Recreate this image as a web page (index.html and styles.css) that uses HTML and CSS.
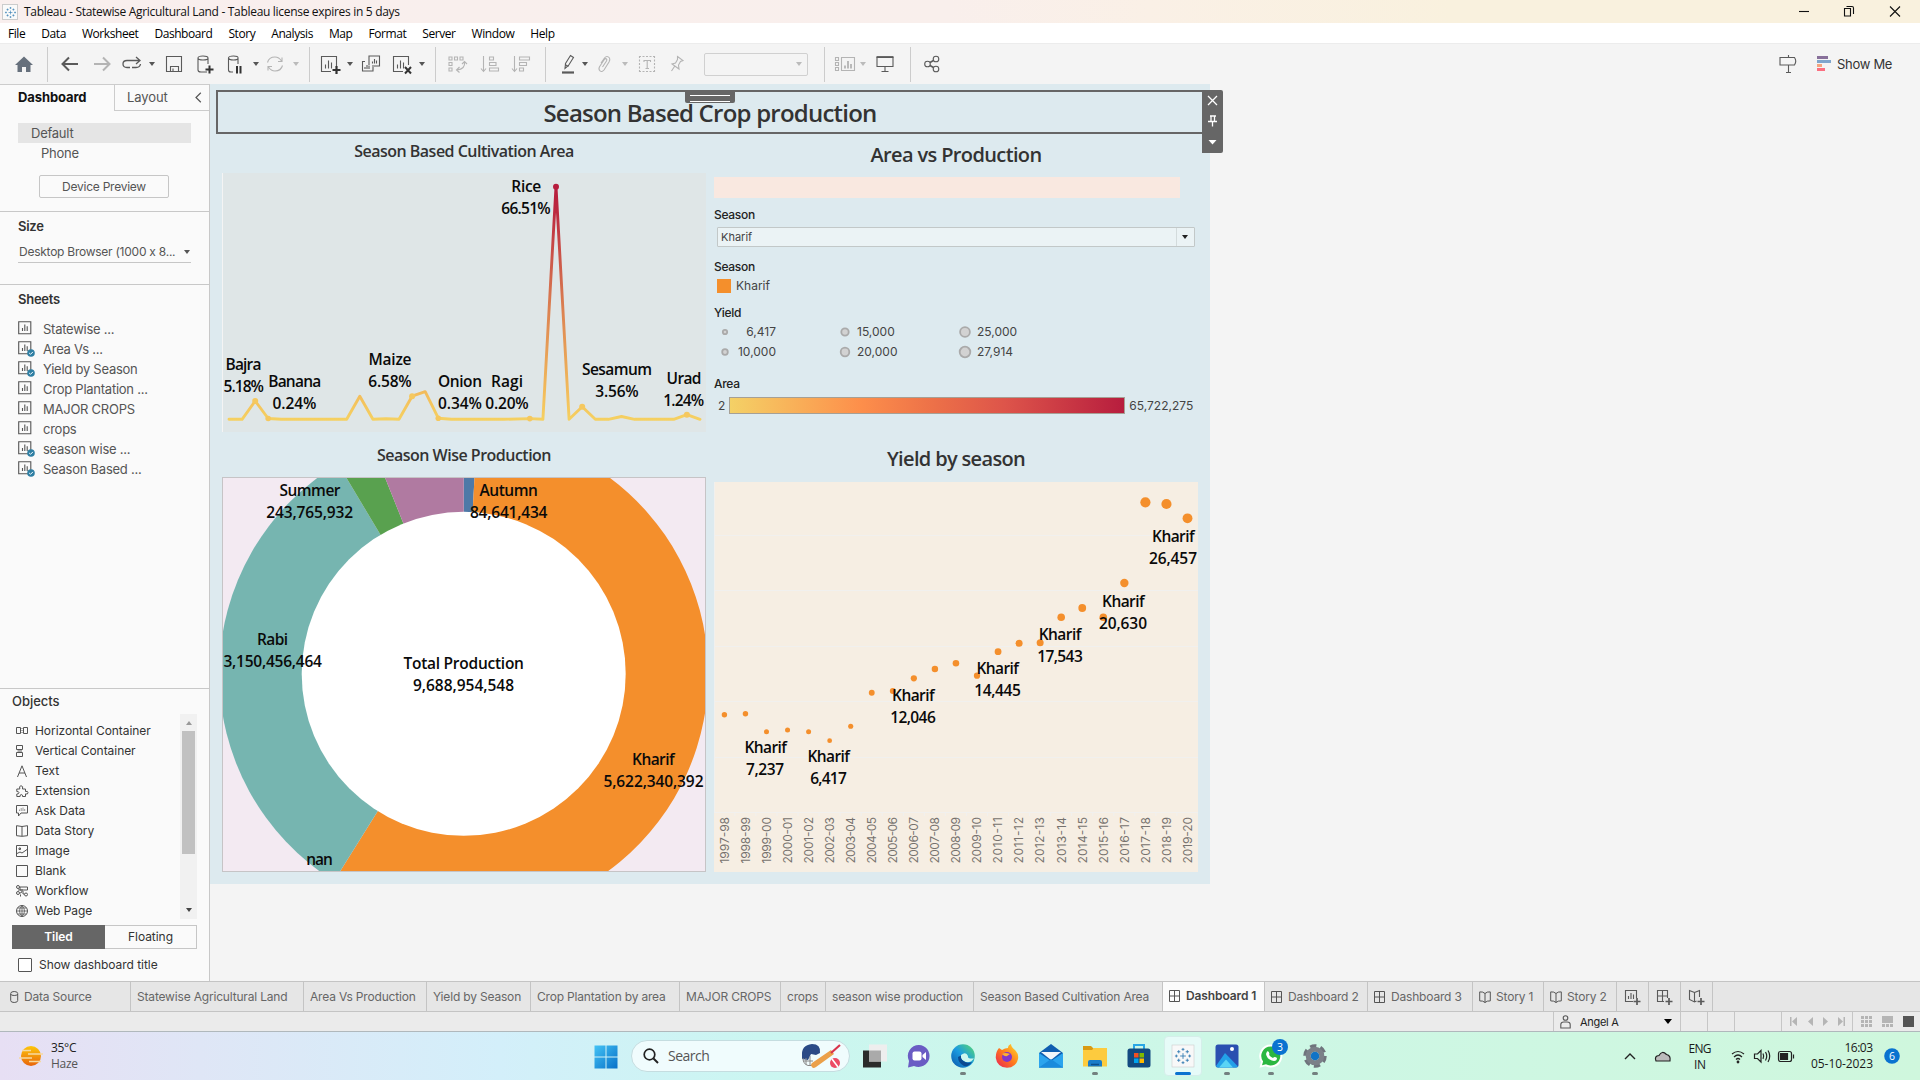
FILE: index.html
```html
<!DOCTYPE html>
<html lang="en">
<head>
<meta charset="utf-8">
<title>Tableau - Statewise Agricultural Land</title>
<link rel="stylesheet" href="styles.css">
</head>
<body>
<svg class="defs" width="0" height="0">
  <symbol id="i-sheet" viewBox="0 0 14 14"><path d="M.7.7h12.1v12.1H.7zM4.5 10V7M6.8 10V3.5M9.2 10V5.2" fill="none" stroke="#555" stroke-width="1.1"/></symbol>
  <symbol id="i-check" viewBox="0 0 8 8"><circle cx="4" cy="4" r="3.8" fill="#2f7fa3"/><path d="M2.2 4l1.3 1.3L5.9 2.9" fill="none" stroke="#fff"/></symbol>
  <symbol id="i-dash" viewBox="0 0 12 12"><path d="M.5.5h10v11H.5zM5.500.5v11M.5 6h10" fill="none" stroke="#555"/></symbol>
  <symbol id="i-story" viewBox="0 0 12 12"><path d="M6 2.500v9M6 2.500Q4 .5 .7.9v9Q4 9.600 6 11.500Q8 9.600 11.300 9.900V.9Q8 .5 6 2.500" fill="none" stroke="#555"/></symbol>
  <symbol id="i-tableau" viewBox="0 0 20 20"><path d="M10 7v6M7 10h6M10 1.500v3M8.500 3h3M10 15.500v3M8.500 17h3M3 8.500v3M1.500 10h3M17 8.500v3M15.500 10h3M5.500 3.800v3.400M3.800 5.500h3.400M14.500 3.800v3.400M12.800 5.500h3.400M5.500 12.800v3.400M3.800 14.500h3.400M14.500 12.800v3.400M12.800 14.500h3.400" fill="none" stroke="#2d78b0" stroke-width=".9"/></symbol>
</svg>

<header class="titlebar">
  <span class="appicon"><svg width="13" height="13"><use href="#i-tableau"/></svg></span>
  <span class="apptitle">Tableau - Statewise Agricultural Land - Tableau license expires in 5 days</span>
  <svg class="winbtns" width="110" height="22" viewBox="1795 0 110 22" fill="none" stroke="#111" stroke-width="1.1"><path d="M1799 10.500h10"/><path d="M1844.500 7.500h6v7.500h-6zM1846.500 5.500h5.500q1.500 0 1.500 1.500v6"/><path d="M1890 5.500l10 10M1900 5.500l-10 10"/></svg>
</header>

<nav class="menubar"><span>File</span><span>Data</span><span>Worksheet</span><span>Dashboard</span><span>Story</span><span>Analysis</span><span>Map</span><span>Format</span><span>Server</span><span>Window</span><span>Help</span></nav>

<div class="toolbar">
  <svg viewBox="0 0 24 24"><path d="M12 4.500l9 8.500h-2.500v7h-4.500v-5h-4v5H5.500v-7H3z" fill="#66707c"/></svg>
  <i class="sep left"></i>
  <svg viewBox="0 0 24 24" class="k2"><path d="M20 12H5M11 5.500L4.500 12l6.500 6.500"/></svg>
  <svg viewBox="0 0 24 24" class="g2"><path d="M4 12h15M13 5.500l6.500 6.500-6.500 6.500"/></svg>
  <svg viewBox="0 0 24 24" class="k"><path d="M10 15.500H7q-4 0-4-3.500t4-3.500h12M16 5l4 3.500-4 3.500M12 15.500h4q4 0 4.500-3.500" stroke-width="1.300"/></svg>
  <i class="caret"></i>
  <svg viewBox="0 0 24 24" class="k"><path d="M4.500 4.500h15v15h-15zM8.500 19.500v-5h8v5M11 19.500v-3"/></svg>
  <svg viewBox="0 0 24 24" class="k"><path d="M14 20H8q-3 0-3-2V6M15 6v6M5 6q0-2 5-2t5 2q0 2-5 2t-5-2"/><path d="M12.500 17.500h8M16.500 13.500v8" stroke="#333" stroke-width="2"/></svg>
  <svg viewBox="0 0 24 24" class="k"><path d="M10 20H8q-2.500 0-2.500-2V6M15 6v6M5.500 6q0-2 5-2t4.500 2q0 2-4.500 2t-5-2"/><path d="M14 14v7.500M17.500 14v7.500" stroke="#333" stroke-width="2"/></svg>
  <i class="caret"></i>
  <svg viewBox="0 0 24 24" class="g"><path d="M4.500 10.500Q6 5 12 5q4 0 6.500 4M19 5.500V9.500h-4M19.500 13.500Q18 19 12 19q-4 0-6.500-4M5 18.500V14.500h4"/></svg>
  <i class="caret pale"></i>
  <i class="sep"></i>
  <svg viewBox="0 0 24 24" class="k"><path d="M13 19.500H3.500v-15h15V14M7.500 16.500v-4M10.500 16.500v-8M13.500 16.500v-6"/><path d="M14.500 18h8M18.500 14v8" stroke="#333" stroke-width="2.200"/></svg>
  <i class="caret"></i>
  <svg viewBox="0 0 24 24" class="k"><path d="M10 13.500V4h10.500v10H13M6 9.500H3.500v9.500H14v-4M13.500 11.500v-2M15.500 11.500V7M17.500 11.500v-3M6 17v-2M8 17v-4M10 17v-3"/></svg>
  <svg viewBox="0 0 24 24" class="k"><path d="M13 19.500H3.500v-15h15V13M7.500 16.500v-4M10.500 16.500v-8M13.500 16.500v-6"/><path d="M15 15l6 6.500M21 15l-6 6.500" stroke="#333" stroke-width="2"/></svg>
  <i class="caret"></i>
  <i class="sep"></i>
  <svg viewBox="0 0 24 24" class="g"><path d="M4 5h3v3H4zM9.500 5h3v3h-3zM15 5h3v3h-3zM4 10.500h3v3H4zM4 16h3v3H4zM19.500 10q1 7-7.500 8M17 12l2.500-2.500L22 12M14.500 15L11.500 18l3 2.500"/></svg>
  <svg viewBox="0 0 24 24" class="g"><path d="M5.500 4v15M3 16.500L5.500 19.500 8 16.500M11.500 5h4v3h-4zM11.500 10.500h6.500v3h-6.500zM11.500 16h9v3h-9z"/></svg>
  <svg viewBox="0 0 24 24" class="g"><path d="M5.500 4v15M3 16.500L5.500 19.500 8 16.500M10.500 5h10v3h-10zM10.500 10.500h7v3h-7zM10.500 16h4v3h-4z"/></svg>
  <i class="sep"></i>
  <svg viewBox="0 0 24 24" class="k"><path d="M8.500 11.500L13.500 3.500l3 2-5 8-3.500 3zM8 12.500l3.500 2"/><path d="M5 20.500h12" stroke-width="2.200"/></svg>
  <i class="caret"></i>
  <svg viewBox="0 0 24 24" class="g"><path d="M8 11l3.500-5q2.500-3 5 0 .8 1.500-.5 4l-5 8q-2 2.500-4 .8-1.800-1.500-.5-4l5-7.500q1-1.200 2-.3.800.8 0 2l-4 6"/></svg>
  <i class="caret pale"></i>
  <svg viewBox="0 0 24 24" class="g"><path d="M4 4.500h16M4 19.500h16M4.500 4v16M19.500 4v16" stroke-dasharray="2 1.500"/><path d="M9 10V8.500h6.500V10M12.200 8.500v8M10.500 16.500h3.500"/></svg>
  <svg viewBox="0 0 24 24" class="g"><path d="M12.500 4.500l5.500 4-2.500 1-2 3.500.5 4-7-5 3.500-1 2-3.500zM9.500 14.500L6.500 19"/></svg>
  <span class="combo"><i class="caret pale"></i></span>
  <i class="sep"></i>
  <svg viewBox="0 0 24 24" class="g"><path d="M8.500 5.500h13v13h-13zM2.500 5.500h3v3h-3zM2.500 10.500h3v3h-3zM2.500 15.500h3v3h-3z"/><path d="M12 16.500v-3M15 16.500V9M18 16.500V12" stroke-width="1.800"/></svg>
  <i class="caret pale"></i>
  <svg viewBox="0 0 24 24" class="k"><path d="M4 5.500h16v9H4zM12 14.500v5M8.500 19.500h7"/><path d="M3.500 5h17" stroke-width="1.800"/></svg>
  <i class="sep"></i>
  <svg viewBox="0 0 24 24" class="k"><circle cx="7.500" cy="12" r="2.800"/><circle cx="16" cy="7" r="2.800"/><circle cx="16" cy="17" r="2.800"/><path d="M10 10.500l3.500-2M10 13.500l3.500 2" stroke-width="1.500"/></svg>
  <b></b>
  <svg viewBox="0 0 24 24" class="k"><path d="M12.500 3v2.500M12.500 13v8M10 20.500h5M4 5.500h14.500q2.500 3.500 0 7.500H4z"/></svg>
  <div class="showme"><svg width="15" height="16" viewBox="0 0 15 16"><path fill="#88709a" d="M0 0h11v3H0z"/><path fill="#7fa5cc" d="M0 4h14v3H0z"/><path fill="#f4a57f" d="M0 8h5v3H0z"/><path fill="#fb6f80" d="M0 12h8v3H0z"/></svg><span>Show Me</span></div>
</div>

<main class="work">
  <aside class="side">
    <div class="sidetabs"><b>Dashboard</b><div><span>Layout</span><svg width="7" height="11" viewBox="0 0 7 11"><path d="M5.800.8L1 5.500l4.800 4.700" fill="none" stroke="#555" stroke-width="1.200"/></svg></div></div>
    <section class="devices">
      <div class="dev on">Default</div>
      <div class="dev phone">Phone</div>
      <div class="preview"><span>Device Preview</span></div>
    </section>
    <section class="size"><h3>Size</h3><div class="sizepick"><span>Desktop Browser (1000 x 8...</span><i class="caret"></i></div></section>
    <section class="sheets"><h3>Sheets</h3>
      <ul>
        <li><em><svg class="sh"><use href="#i-sheet"/></svg></em><span>Statewise ...</span></li>
        <li><em><svg class="sh"><use href="#i-sheet"/></svg><svg class="ck"><use href="#i-check"/></svg></em><span>Area Vs ...</span></li>
        <li><em><svg class="sh"><use href="#i-sheet"/></svg><svg class="ck"><use href="#i-check"/></svg></em><span>Yield by Season</span></li>
        <li><em><svg class="sh"><use href="#i-sheet"/></svg></em><span>Crop Plantation ...</span></li>
        <li><em><svg class="sh"><use href="#i-sheet"/></svg></em><span>MAJOR CROPS</span></li>
        <li><em><svg class="sh"><use href="#i-sheet"/></svg></em><span>crops</span></li>
        <li><em><svg class="sh"><use href="#i-sheet"/></svg><svg class="ck"><use href="#i-check"/></svg></em><span>season wise ...</span></li>
        <li><em><svg class="sh"><use href="#i-sheet"/></svg><svg class="ck"><use href="#i-check"/></svg></em><span>Season Based ...</span></li>
      </ul>
    </section>
    <section class="objects"><h3>Objects</h3>
      <div class="objbox">
        <ul>
          <li><svg viewBox="0 0 12 12"><path d="M.5 2.500h4v6h-4zM7.500 2.500h4v6h-4z"/><path d="M5 3.500h2M5 5.500h2M5 7.500h2" stroke="#aaa"/></svg><span>Horizontal Container</span></li>
          <li><svg viewBox="0 0 12 12"><path d="M.5.5h6v4h-6zM.5 7.500h6v4h-6z"/><path d="M1.500 6h4.500" stroke="#aaa" stroke-width="2"/></svg><span>Vertical Container</span></li>
          <li><svg viewBox="0 0 12 12"><path d="M1.500 12L6 .8 10.500 12M3 8h6"/></svg><span>Text</span></li>
          <li><svg viewBox="0 0 12 12"><path d="M.8 4h3q-1-3 1.200-3.300Q7.500 1 6.500 4h3v2.500q2.500-.8 2.500 1.200t-2.500 1.200V11.500h-3q.3-2-1.200-2t-1.200 2H.8V9q2.200 0 2.200-1.300T.8 6.500z"/></svg><span>Extension</span></li>
          <li><svg viewBox="0 0 12 12"><path d="M.5.5h11v7.500H5l-2.500 3V8h-2z"/><path d="M3.500 6V4.500M5.200 6V3M7 6V2.500M8.700 6V4" stroke="#999"/></svg><span>Ask Data</span></li>
          <li><svg viewBox="0 0 12 12"><path d="M6 1.500v9.500M6 1.500L.5.7v10l5.500.6 5.500-.6v-10z"/></svg><span>Data Story</span></li>
          <li><svg viewBox="0 0 12 12"><path d="M.5.5h11v11H.5zM1 8.500l3-1.500 2 1 5-3.500M3 3h1.500v1.500H3z"/></svg><span>Image</span></li>
          <li><svg viewBox="0 0 12 12"><path d="M.5.5h11v11H.5z"/></svg><span>Blank</span></li>
          <li><svg viewBox="0 0 12 12"><circle cx="2" cy="2" r="1.500"/><circle cx="2" cy="8" r="1.500"/><circle cx="10" cy="9.500" r="1.500"/><path d="M4 2h7.500v3H4zM4 8q2 0 2-2M7 6v3h1.500M4.500 9.500v2M2 5h5"/></svg><span>Workflow</span></li>
          <li><svg viewBox="0 0 12 12"><circle cx="6" cy="6" r="5.500"/><path d="M.5 6h11M6 .5v11M6 .5q-5 5.500 0 11M6 .5q5 5.500 0 11M1.500 3h9M1.500 9h9" stroke-width=".8"/></svg><span>Web Page</span></li>
        </ul>
        <div class="scroll"><i class="up"></i><i class="thumb"></i><i class="down"></i></div>
      </div>
      <div class="toggle"><b>Tiled</b><span>Floating</span></div>
      <div class="showtitle"><i></i><span>Show dashboard title</span></div>
    </section>
  </aside>

  <div class="dashboard">
    <div class="dtitle"><h1>Season Based Crop production</h1>
      <i class="grip"></i>
      <div class="zonebtns"><svg width="21" height="63" viewBox="0 0 21 63" fill="none" stroke="#fff" stroke-width="1.300"><path d="M6 6l9 9M15 6l-9 9"/><path d="M8 26h6M9 26v5.500M12.500 26v5.500M6 31.500h9M10.500 31.500v5"/><path d="M6.500 50h8l-4 4.500z" fill="#fff" stroke="none"/></svg></div>
    </div>
    <div class="col">
      <h2 class="ha"><span>Season Based Cultivation Area</span></h2>
      <svg class="chart line" width="484" height="259" viewBox="222 173 484 259">
        <defs><linearGradient id="gl" gradientUnits="userSpaceOnUse" x1="0" y1="419" x2="0" y2="187"><stop offset="0" stop-color="#f5d061"/><stop offset=".1" stop-color="#f3be5c"/><stop offset=".45" stop-color="#dd8552"/><stop offset=".7" stop-color="#cb5549"/><stop offset=".88" stop-color="#bd2a40"/><stop offset="1" stop-color="#b71d3e"/></linearGradient></defs>
        <path d="M222.500 173v259" stroke="#f4f4f4"/>
        <polyline fill="none" stroke="url(#gl)" stroke-width="2.900" stroke-linejoin="round" stroke-linecap="round" points="229,419.300 242.100,419.300 255.200,401 268.200,418.500 281.300,419.300 346.700,419.300 359.800,396.200 372.900,419.300 386,418.800 399,419.300 412.100,396.200 425.200,391.700 438.300,418.200 451.400,419.300 503.700,419.300 529.800,418.600 542.900,419.300 556,186.700 569.100,419.300 582.200,406.700 595.300,419.300 608.400,419.300 621.500,416.500 634.600,419.300 673.700,419.300 686.900,414.700 700,419.300"/>
        <g fill="#f5c85f"><circle cx="255.200" cy="401" r="3"/><circle cx="268.200" cy="418.500" r="2.800"/><circle cx="412.100" cy="396.200" r="3"/><circle cx="438.300" cy="418.200" r="2.800"/><circle cx="529.800" cy="418.600" r="2.800"/><circle cx="582.200" cy="406.700" r="3"/><circle cx="686.900" cy="414.700" r="3"/></g>
        <circle cx="556" cy="186.700" r="3" fill="#b71d3e"/>
        <g class="lbl">
          <text x="526.300" y="192" textLength="30">Rice</text><text x="526" y="214" textLength="49.500">66.51%</text>
          <text x="243.500" y="370" textLength="36">Bajra</text><text x="243.700" y="392" textLength="40.500">5.18%</text>
          <text x="294.700" y="387" textLength="53">Banana</text><text x="294.500" y="409" textLength="44">0.24%</text>
          <text x="390" y="365" textLength="43">Maize</text><text x="390" y="387" textLength="43.500">6.58%</text>
          <text x="460" y="387" textLength="44">Onion</text><text x="460" y="409" textLength="44">0.34%</text>
          <text x="507" y="387" textLength="32">Ragi</text><text x="507" y="409" textLength="43.500">0.20%</text>
          <text x="617" y="375" textLength="70">Sesamum</text><text x="617" y="397" textLength="43.500">3.56%</text>
          <text x="684" y="384" textLength="35">Urad</text><text x="683.700" y="406" textLength="41">1.24%</text>
        </g>
      </svg>
      <h2 class="hb"><span>Season Wise Production</span></h2>
      <svg class="chart donut" width="484" height="395" viewBox="222 477 484 395">
        <rect x="222" y="477" width="484" height="395" fill="#f3eaf2"/>
        <g id="pie"></g>
        <circle cx="463.700" cy="673.800" r="162" fill="#fff"/>
        <rect x="222.500" y="477.500" width="483" height="394" fill="none" stroke="#c6c4c6"/>
        <g class="lbl">
          <text x="310" y="496" textLength="61">Summer</text><text x="309.700" y="518" textLength="87">243,765,932</text>
          <text x="508.700" y="496" textLength="58.500">Autumn</text><text x="508.700" y="518" textLength="77.500">84,641,434</text>
          <text x="272.500" y="645" textLength="31">Rabi</text><text x="272.700" y="667" textLength="98.500">3,150,456,464</text>
          <text x="463.700" y="669" textLength="120.500">Total Production</text><text x="463.500" y="691" textLength="101">9,688,954,548</text>
          <text x="653.300" y="765" textLength="42.500">Kharif</text><text x="653.500" y="787" textLength="100">5,622,340,392</text>
          <text x="319.500" y="865" textLength="26.500">nan</text>
        </g>
      </svg>
    </div>
    <div class="col">
      <h2 class="hc"><span>Area vs Production</span></h2>
      <div class="pink"></div>
      <div class="ctl">
        <h4 class="c1">Season</h4>
        <div class="drop"><span>Kharif</span><em><i class="caret"></i></em></div>
        <h4 class="c2">Season</h4>
        <div class="key"><i></i><span>Kharif</span></div>
        <h4 class="c3">Yield</h4>
        <div class="yield">
          <div><svg><circle cx="9" cy="9" r="2.200"/></svg><span class="r">6,417</span></div><div><svg><circle cx="9" cy="9" r="3.700"/></svg><span>15,000</span></div><div><svg><circle cx="9" cy="9" r="4.900"/></svg><span>25,000</span></div>
          <div><svg><circle cx="9" cy="9" r="2.800"/></svg><span class="r">10,000</span></div><div><svg><circle cx="9" cy="9" r="4.300"/></svg><span>20,000</span></div><div><svg><circle cx="9" cy="9" r="5.300"/></svg><span>27,914</span></div>
        </div>
        <h4 class="c4">Area</h4>
        <div class="ramp"><span>2</span><i></i><span>65,722,275</span></div>
      </div>
      <h2 class="hd"><span>Yield by season</span></h2>
      <svg class="chart scatter" width="484" height="390" viewBox="714 482 484 390">
        <rect x="714" y="482" width="484" height="390" fill="#f6eee3"/>
        <path d="M714.500 482v330M714 535.500h484M714 590.500h484M714 646.500h484M714 701.500h484M714 757.500h484M714 812.500h484" stroke="#f1f0ee"/>
        <g id="dots" fill="#f48f2c"></g>
        <g id="years" class="years"></g>
        <g class="lbl">
          <text x="765.700" y="753" textLength="42.500">Kharif</text><text x="765" y="775" textLength="38">7,237</text>
          <text x="828.700" y="762" textLength="42.500">Kharif</text><text x="828.500" y="784" textLength="36.500">6,417</text>
          <text x="913.300" y="701" textLength="42.500">Kharif</text><text x="913" y="723" textLength="45.500">12,046</text>
          <text x="997.700" y="674" textLength="42.500">Kharif</text><text x="997.500" y="696" textLength="46.500">14,445</text>
          <text x="1060" y="640" textLength="42.500">Kharif</text><text x="1060" y="662" textLength="45.500">17,543</text>
          <text x="1123.300" y="607" textLength="42.500">Kharif</text><text x="1123" y="629" textLength="48">20,630</text>
          <text x="1173.300" y="542" textLength="42.500">Kharif</text><text x="1173" y="564" textLength="48">26,457</text>
        </g>
      </svg>
    </div>
  </div>
</main>

<div class="tabs">
  <div><svg width="9" height="12" viewBox="0 0 9 12"><path d="M.7 2.500q0-2 3.500-2t3.500 2v7q0 2-3.500 2t-3.500-2zM.7 3q0 1.500 3.500 1.500t3.500-1.500" fill="none" stroke="#555"/></svg><span>Data Source</span></div>
  <div><span>Statewise Agricultural Land</span></div><div><span>Area Vs Production</span></div><div><span>Yield by Season</span></div><div><span>Crop Plantation by area</span></div><div><span>MAJOR CROPS</span></div><div><span>crops</span></div><div><span>season wise production</span></div><div><span>Season Based Cultivation Area</span></div>
  <div class="on"><svg class="t"><use href="#i-dash"/></svg><span>Dashboard 1</span></div>
  <div><svg class="t"><use href="#i-dash"/></svg><span>Dashboard 2</span></div><div><svg class="t"><use href="#i-dash"/></svg><span>Dashboard 3</span></div>
  <div><svg class="t"><use href="#i-story"/></svg><span>Story 1</span></div><div><svg class="t"><use href="#i-story"/></svg><span>Story 2</span></div>
  <div class="add"><svg width="17" height="17" viewBox="0 0 17 17" class="k"><path d="M9 12.500H1.500v-11h11V9M4.500 10V7M7 10V4M9.500 10V5.500"/><path d="M9.500 12.500h7M13 9v7" stroke-width="1.700"/></svg></div>
  <div class="add"><svg width="17" height="17" viewBox="0 0 17 17" class="k"><path d="M8 12.500H1.500v-11h10V9M6.500 1.500v11M1.500 7h10"/><path d="M9.500 12.500h7M13 9v7" stroke-width="1.700"/></svg></div>
  <div class="add"><svg width="17" height="17" viewBox="0 0 17 17" class="k"><path d="M6.500 3.500v9.500M6.500 3.500L1.500 1.500v9l5 2.500 2-1M6.500 3.500l5-2V8"/><path d="M9.500 12.500h7M13 9v7" stroke-width="1.700"/></svg></div>
</div>
<div class="status">
  <span></span>
  <div class="user"><svg width="11" height="14" viewBox="0 0 11 14" class="k"><circle cx="5.500" cy="3" r="2.300"/><path d="M.8 13v-3.500q0-2.500 3-2.500h3.400q3 0 3 2.500V13z"/></svg><span>Angel A</span><i class="caret"></i></div>
  <span></span><span></span><span></span>
  <div class="nav"><svg width="60" height="10" viewBox="0 0 60 10" fill="#b5b5b5"><path d="M0 0h1.500v9H0zM7 0v9L2 4.500zM23 0v9l-5-4.500zM33 0v9l5-4.500zM48 0v9l5-4.500zM53.500 0H55v9h-1.500z"/></svg></div>
  <div class="views"><svg width="54" height="12" viewBox="0 0 54 12" fill="#b5b5b5"><path d="M0 0h3v3H0zM4 0h3v3H4zM8 0h3v3H8zM0 4h3v3H0zM4 4h3v3H4zM8 4h3v3H8zM0 8h3v3H0zM4 8h3v3H4zM8 8h3v3H8zM21 0h11v7H21zM21 8h3v3h-3zM25 8h3v3h-3zM29 8h3v3h-3z"/><path d="M42 0h11v11H42z" fill="#555"/></svg></div>
</div>

<footer class="taskbar">
  <div class="weather"><svg width="24" height="22" viewBox="0 0 24 22"><defs><linearGradient id="sun" x1="0" y1="0" x2="0" y2="1"><stop offset="0" stop-color="#fdc60a"/><stop offset="1" stop-color="#e8640c"/></linearGradient></defs><circle cx="12" cy="11" r="10" fill="url(#sun)"/><path d="M3 5.500h9M9 9h15M0 13h13M10 16.500h12" stroke="#f6d9a0" stroke-width="1.300"/></svg><p>35°C<br><small>Haze</small></p></div>
  <div class="apps">
    <svg class="start" viewBox="0 0 24 24"><defs><linearGradient id="win" x1="0" y1="0" x2="1" y2="1"><stop offset="0" stop-color="#43c3f5"/><stop offset="1" stop-color="#0870c8"/></linearGradient></defs><path fill="url(#win)" d="M.5.500h11v11H.5zM12.500.500h11v11h-11zM.5 12.500h11v11H.5zM12.500 12.500h11v11h-11z"/></svg>
    <div class="search"><svg width="16" height="16" viewBox="0 0 16 16"><path d="M10.500 10.500L15 15" stroke="#222" stroke-width="2"/><circle cx="6.500" cy="6.500" r="5.300" fill="none" stroke="#222" stroke-width="1.700"/></svg><span>Search</span>
      <svg class="cricket" width="42" height="26" viewBox="0 0 42 26"><path d="M2 13Q1 2 12 1q9 0 8 9l-4 2-5-1-3 6-6-1z" fill="#2b4a86"/><path d="M3 15q0 6 5 7.500h6M3 18h10M6 15v7M10 13v9" fill="none" stroke="#888"/><path d="M12 24q-2-2 0-4L31 7l3 4L16 24q-3 2-4 0z" fill="#eba04a"/><path d="M31 10L40 2" stroke="#d9324b" stroke-width="2.200"/><circle cx="35" cy="20" r="5" fill="#ec4a64"/><path d="M32 16l6 8" stroke="#fff" stroke-width="1.500"/></svg></div>
    <div class="app"><svg viewBox="0 0 24 24"><path d="M0 6.500h18v17H0z" fill="#2b2b2b"/><path d="M6 .5h18v17H6z" fill="#eee"/><path d="M6 6.500h12v11H6z" fill="#aaa"/></svg></div>
    <div class="app"><svg viewBox="0 0 24 24"><path d="M12 1a11 11 0 1 1-5 21L1 23.500 2 17A11 11 0 0 1 12 1z" fill="#6a5cc4"/><rect x="5.500" y="7.500" width="9" height="9" rx="2" fill="#fff"/><path d="M15.500 11l3.500-3v8l-3.500-3z" fill="#fff"/></svg></div>
    <div class="app run"><svg viewBox="0 0 24 24"><defs><linearGradient id="ed" x1="0" y1="1" x2="1" y2="0"><stop offset="0" stop-color="#0a55a8"/><stop offset=".5" stop-color="#1b9be0"/><stop offset="1" stop-color="#5bdc6a"/></linearGradient></defs><circle cx="12" cy="12" r="11.800" fill="url(#ed)"/><path d="M10 11q5-4 7 1-1 3 6 2.500l-3 3q-5 2-8-1-3-2-2-5.500z" fill="#cdf7ee"/><path d="M7 13q0 6 6 9 5 1 8-4-5 2-8.500-1-3-2-2.500-5.500z" fill="#0b4a91"/></svg></div>
    <div class="app"><svg viewBox="0 0 24 24"><defs><linearGradient id="ff" x1="1" y1="0" x2="0" y2="1"><stop offset="0" stop-color="#ffe02e"/><stop offset=".5" stop-color="#ff7a1c"/><stop offset="1" stop-color="#e91e5a"/></linearGradient></defs><path d="M4 4l3 2q3-2 6-2 0-3 3-4 0 3 4 6 4 4 3 9-2 8.500-11 8.800Q2 23 .8 14 .5 8 4 4z" fill="url(#ff)"/><circle cx="12" cy="13" r="5" fill="#8435c9"/><path d="M7 10q3-2 8 0l-3 2q-2 1-5-2z" fill="#ffb02e"/></svg></div>
    <div class="app"><svg viewBox="0 0 24 24"><path d="M12 0l12 9v14.500H0V9z" fill="#0f5eb0"/><path d="M2 8h20l-10 8z" fill="#f2f6fa"/><path d="M0 9l12 8 12-8v14.500H0z" fill="#2ba4ee"/><path d="M0 23.500L12 15l12 8.500z" fill="#1a8bdc"/></svg></div>
    <div class="app run"><svg viewBox="0 0 24 24"><path d="M0 2h8l3 3v6H0z" fill="#d99a12"/><path d="M0 6h9l2-2h13v18.500H0z" fill="#fdcb3e"/><path d="M5 22.500V18q0-2 2-2h10q2 0 2 2v4.500z" fill="#1a7cc9"/><path d="M8 20.500h8" stroke="#0c4f8d" stroke-width="1.500"/></svg></div>
    <div class="app"><svg viewBox="0 0 24 24"><path d="M7 5V1h10v4" fill="none" stroke="#2aa6e5" stroke-width="2"/><rect x=".5" y="4.500" width="23" height="19" rx="2.500" fill="#124a80"/><path d="M7 9h4.500v4.500H7z" fill="#f25022"/><path d="M12.500 9H17v4.500h-4.500z" fill="#7fba00"/><path d="M7 14.500h4.500V19H7z" fill="#00a4ef"/><path d="M12.500 14.500H17V19h-4.500z" fill="#ffb900"/></svg></div>
    <div class="app cur"><svg viewBox="0 0 24 24"><rect x="1" y="1" width="22" height="22" fill="#f8f8f8" stroke="#ccc" stroke-width=".6"/><use href="#i-tableau" x="2.500" y="2.500" width="19" height="19"/></svg></div>
    <div class="app run"><svg viewBox="0 0 24 24"><rect x=".5" y=".5" width="23" height="23" rx="2.500" fill="#2a4fb0"/><path d="M1 22L10 9l13 13.500q-1 1-2 1H3q-1.500 0-2-1.500z" fill="#23a0e8"/><path d="M4 23.500l7-8 7 8z" fill="#5ad4f5"/><circle cx="17" cy="5" r="2" fill="#fff"/></svg></div>
    <div class="app run"><svg viewBox="0 0 24 24"><path d="M12 .5a11.500 11.500 0 1 1-5.500 21.700L.5 23.800 2 18A11.500 11.500 0 0 1 12 .5z" fill="#fff"/><path d="M12 2.500a9.500 9.500 0 1 1-5 17.700L3 21.300 4.100 17.500A9.500 9.500 0 0 1 12 2.500z" fill="#2bb741"/><path d="M8 7.500q2-1 2.500 2.500-1.500 1.500 3.500 4 1.500-2 4 0 0 3-3 3-7-1-8-7z" fill="#fff"/></svg><b class="badge">3</b></div>
    <div class="app run"><svg viewBox="0 0 24 24"><circle cx="12" cy="12" r="9.500" fill="none" stroke="#6f747c" stroke-width="4.500" stroke-dasharray="6 3.950"/><circle cx="12" cy="12" r="6.800" fill="none" stroke="#7b8088" stroke-width="5"/><circle cx="12" cy="12" r="4.300" fill="#1173c6"/></svg></div>
  </div>
  <div class="tray">
    <svg width="304" height="48" viewBox="1616 0 304 48">
      <path d="M1625 27l5-5 5 5" fill="none" stroke="#222" stroke-width="1.400"/>
      <path d="M1656 29q-2-5 3-5.500 3-5.500 7.500-1 4.500 1 3.500 6.500z" fill="#bbb" stroke="#222" stroke-width="1.200"/>
      <g fill="none" stroke="#222" stroke-width="1.200"><path d="M1732 22q6-5 12 0M1734 25q4-4 8 0M1736 27.500q2-2 4 0"/><circle cx="1738" cy="30" r=".8" fill="#222"/><path d="M1754.500 22h3l3.500-3.500v11.500l-3.500-3.500h-3zM1763 21.500q1.500 3 0 5.500M1765.500 20q2.500 4 0 8.500M1768 18.500q3.500 5.500 0 11.500"/><rect x="1778.500" y="19.500" width="13" height="10" rx="2"/><path d="M1793.500 22.500v4"/><path d="M1780.500 21.500h7v6h-7z" fill="#222"/></g>
      <g class="tt"><text x="1700" y="21" text-anchor="middle" textLength="23">ENG</text><text x="1700" y="37" text-anchor="middle" textLength="12">IN</text><text x="1844.500" y="20" textLength="28.500">16:03</text><text x="1811" y="36" textLength="62">05-10-2023</text></g>
      <circle cx="1892" cy="24" r="7.800" fill="#0a73d0"/><text class="n" x="1892" y="28" text-anchor="middle">6</text>
    </svg>
  </div>
</footer>
<script src="charts.js"></script>
</body>
</html>
```
FILE: styles.css
```css
* { box-sizing: border-box; }
body { margin: 0; width: 1920px; height: 1080px; overflow: hidden; display: flex; flex-direction: column; background: #f4f4f4; font: 12px/16px Inter, "Liberation Sans", sans-serif; font-feature-settings: "calt" 0; color: #444; }
h1, h2, h3, h4, ul, p { margin: 0; padding: 0; font-weight: normal; }
ul { list-style: none; }
i, em { font-style: normal; display: block; }
svg { display: block; flex: none; }
.defs { position: absolute; }
.k, .k2, .g, .g2 { fill: none; stroke: #5a5a5a; stroke-width: 1.1; }
.k2 { stroke-width: 2; }
.g, .g2 { stroke: #b4b4b4; }
.g2 { stroke-width: 2; }
.caret { width: 0; height: 0; border: 3px solid transparent; border-top: 4px solid #555; border-bottom: 0; }
.caret.pale { border-top-color: #bbb; }

.titlebar { height: 23px; flex: none; display: flex; align-items: center; background: linear-gradient(90deg, #f9efee 0, #f9efec 950px, #faf0e6 1150px, #f9f1de 1450px); color: #111; }
.appicon { width: 16px; height: 16px; margin: 0 6px 0 2px; padding: 1px; background: #fafafa; border: 1px solid #ccc; }
.apptitle { font: 12px/16px "Open Sans", sans-serif; letter-spacing: -.31px; margin-top: 1px; }
.winbtns { margin-left: auto; margin-right: 15px; }
.menubar { height: 20px; flex: none; background: #fff; display: flex; gap: 16px; padding: 2px 8px 0; font: 12px/18px "Open Sans", sans-serif; letter-spacing: -.43px; color: #000; }

.toolbar { height: 41px; flex: none; border-top: 1px solid #ececec; display: grid; align-items: center; justify-items: center;
  grid-template-columns: 47px 3px 40px 24px 36px 4px 40px 22px 38px 4px 34px 8px 18px 24px 16px 26px 36px 4px 22px 22px 44px 18px 30px 18px 14px 26px 14px 30px 30px 128px 8px 34px 2px 42px 8px 36px 1fr 24px 120px; }
.toolbar > svg { width: 24px; height: 24px; }
.sep { width: 1px; height: 35px; background: #ccc; }
.sep.left { justify-self: start; }
.combo { width: 104px; height: 23px; border: 1px solid #d0d0d0; border-radius: 2px; display: flex; align-items: center; justify-content: flex-end; padding-right: 5px; }
.showme { display: flex; align-items: center; gap: 5px; width: 100%; padding-left: 17px; font-size: 13px; letter-spacing: -.3px; color: #333; }

.work { flex: 1; display: flex; min-height: 0; }
.side { width: 210px; background: #fafafa; border-right: 1px solid #c8c8c8; border-top: 1px solid #ccc; display: flex; flex-direction: column; font-size: 13px; letter-spacing: -.25px; color: #555; }
.side section { border-bottom: 1px solid #c8c8c8; }
.side h3 { font-weight: 600; font-size: 13px; color: #333; }
.sidetabs { height: 26px; display: grid; grid-template-columns: 114px 1fr; line-height: 25px; letter-spacing: -.1px; }
.sidetabs b { padding-left: 18px; color: #111; font-weight: 700; }
.sidetabs div { border: solid #ccc; border-width: 0 0 1px 1px; display: flex; align-items: center; justify-content: space-between; padding: 0 7px 0 12px; }
.devices { height: 101px; padding: 12px 18px 0; }
.dev { height: 20px; line-height: 20px; padding-left: 13px; }
.dev.on { background: #e5e5e5; }
.dev.phone { padding-left: 23px; }
.preview { width: 130px; height: 23px; margin: 12px 0 0 21px; border: 1px solid #c6c6c6; border-radius: 2px; text-align: center; line-height: 21px; font-size: 12px; }
.size { height: 73px; padding: 6px 18px 0; }
.sizepick { display: flex; justify-content: space-between; align-items: center; height: 21px; margin-top: 8px; border-bottom: 1px solid #c6c6c6; font-size: 12px; padding: 0 1px 1px; white-space: nowrap; }
.sheets { flex: 1; padding: 6px 18px 0; }
.sheets ul { margin-top: 12px; }
.sheets li { height: 20px; display: flex; align-items: center; gap: 11px; }
.sheets em { position: relative; width: 14px; height: 14px; margin-bottom: 2px; }
.sh { width: 14px; height: 14px; }
.ck { position: absolute; left: 9px; top: 8px; width: 8px; height: 8px; }
.side .objects { height: 292px; padding: 4px 12px 0; border: 0; letter-spacing: -.05px; }
.objects h3 { font-weight: 500; }
.objbox { display: flex; justify-content: space-between; height: 205px; margin-top: 5px; color: #333; }
.objbox ul { padding: 7px 0 0 4px; }
.objbox li { height: 20px; display: flex; align-items: center; gap: 7px; font-size: 12px; }
.objbox li svg { width: 12px; height: 12px; fill: none; stroke: #555; overflow: visible; }
.scroll { width: 17px; background: #f1f1f1; display: flex; flex-direction: column; align-items: center; }
.up { margin: 7px 0 6px; border: 3.5px solid transparent; border-bottom: 4px solid #999; border-top: 0; }
.thumb { width: 13px; height: 123px; background: #c1c1c1; }
.down { margin-top: 54px; border: 3.5px solid transparent; border-top: 4px solid #444; border-bottom: 0; }
.toggle { display: grid; grid-template-columns: 93px 92px; height: 24px; margin-top: 6px; text-align: center; line-height: 22px; font-size: 12px; }
.toggle b { background: #666; color: #fff; line-height: 24px; font-weight: 600; }
.toggle span { border: 1px solid #c6c6c6; border-left: 0; color: #333; }
.showtitle { display: flex; align-items: center; gap: 7px; margin: 8px 0 0 6px; font-size: 12px; color: #333; }
.showtitle i { width: 14px; height: 14px; border: 1px solid #555; border-radius: 1px; background: #fff; }

.dashboard { width: 1000px; height: 800px; background: #ddeaef; display: grid; grid-template-columns: 484px 484px; grid-template-rows: 50px 1fr; column-gap: 8px; padding: 0 12px; font-family: "Open Sans", sans-serif; color: #333; }
.dtitle { grid-column: 1 / 3; position: relative; margin: 6px -6px 0; height: 44px; border: 2px solid #666; text-align: center; }
.dtitle h1 { font-size: 24px; line-height: 42px; font-weight: 600; letter-spacing: -.77px; }
.grip { position: absolute; left: 467px; top: 0; width: 50px; height: 11px; background: #666; border-radius: 0 0 2px 2px; padding: 3px 5px; }
.grip::before { content: ""; display: block; height: 5px; border: solid #fff; border-width: 1px 0; }
.zonebtns { position: absolute; left: 984px; top: -2px; width: 21px; height: 63px; background: #666; border-radius: 0 2px 2px 0; }
.col { display: flex; flex-direction: column; align-items: flex-start; }
.col h2 { width: 484px; text-align: center; font-weight: 600; flex: none; font-size: 16px; letter-spacing: -.51px; }
.ha { height: 39px; line-height: 35px; }
.hb { height: 45px; line-height: 46px; }
.col .hc { height: 43px; line-height: 42px; font-size: 20px; letter-spacing: -.63px; }
.col .hd { height: 56px; line-height: 66px; font-size: 20px; letter-spacing: -.66px; }
.line { background: #dfe6e7; }
.lbl { font: 600 15.5px "Open Sans", sans-serif; fill: #0a0a0a; text-anchor: middle; }
.years { font: 12px Inter, sans-serif; fill: #76726e; }
.pink { width: 466px; height: 21px; background: #f9e8e0; }
.ctl { height: 228px; width: 484px; display: flex; flex-direction: column; font: 12px/16px Inter, sans-serif; color: #444; }
.ctl h4 { font-size: 12px; line-height: 16px; font-weight: 500; color: #222; letter-spacing: -.3px; }
.c1 { margin-top: 9px; }
.drop { margin: 4px 0 0 3px; width: 478px; height: 20px; border: 1px solid #c2c8c8; background: #ebf3f5; display: flex; justify-content: space-between; line-height: 18px; padding-left: 3px; font-size: 11px; border-radius: 1px; }
.drop em { width: 18px; border-left: 1px solid #d3dbdc; padding: 7px 0 0 5px; }
.drop .caret { border-top-color: #222; }
.c2 { margin-top: 12px; }
.key { display: flex; gap: 5px; margin: 3px 0 0 3px; align-items: center; }
.key i { width: 14px; height: 14px; background: #f48f2c; }
.c3 { margin-top: 11px; }
.yield { display: grid; grid-template-columns: 120px 120px 120px; margin: 1px 0 0 2px; grid-auto-rows: 20px; }
.yield div { display: flex; align-items: center; gap: 3px; }
.yield svg { width: 18px; height: 18px; fill: #d2d2d2; stroke: #aaa; stroke-width: 1.8; }
.yield .r { width: 39px; text-align: right; }
.c4 { margin-top: 14px; }
.ramp { display: flex; margin: 5px 0 0 4px; align-items: center; height: 17px; }
.ramp i { width: 396px; height: 17px; margin: 0 4px; border: 1px solid #a6a095; background: linear-gradient(90deg, #f4d166, #fd8f4b 33%, #ec7048 52%, #dd544a 70%, #b71d3e); }

.tabs { height: 31px; flex: none; border: solid #c4c4c4; border-width: 1px 0; background: #e6e6e6; display: grid; grid-template-columns: 131px 173px 123px 104px 149px 101px 45px 148px 189px 102px 103px 105px 71px 73px 32px 32px 32px; color: #666; font-size: 12px; letter-spacing: -.18px; }
.tabs > div { border-right: 1px solid #c4c4c4; display: flex; align-items: center; padding-left: 6px; gap: 5px; white-space: nowrap; }
.tabs > div:first-child { padding-left: 10px; }
.tabs .on { background: #fbfbfb; font-weight: 600; color: #444; padding-bottom: 2px; letter-spacing: -.1px; }
.tabs .add { padding: 2px 0 0 7px; }
.t { width: 12px; height: 12px; }
.status { height: 20px; flex: none; background: #ebebeb; display: grid; grid-template-columns: 1554px 127px 27px 27px 47px 71px 1fr; border-bottom: 1px solid #b0b8bc; }
.status > * { border-right: 1px solid #c6c6c6; display: flex; align-items: center; }
.status > :last-child { border: 0; }
.user { padding: 0 8px 0 6px; font-size: 11px; letter-spacing: -.3px; color: #222; }
.user svg { margin-right: 9px; }
.user .caret { margin-left: auto; border: 4px solid transparent; border-top: 5px solid #000; border-bottom: 0; }
.nav { padding-left: 8px; }
.views { padding-left: 8px; }

.taskbar { height: 48px; flex: none; display: grid; grid-template-columns: 594px 1fr 304px; background: linear-gradient(90deg, #e7dff4 0, #dfe6f6 200px, #d3effa 500px, #cbf6f1 760px, #cdf7e6 1200px, #cff7dd 1920px); font-family: "Open Sans", sans-serif; color: #222; }
.weather { display: flex; padding: 8px 0 0 19px; gap: 8px; }
.weather p { font-size: 12px; line-height: 16px; letter-spacing: -.3px; }
.weather svg { margin-top: 5px; }
.weather small { font-size: 12px; color: #555; }
.apps { display: flex; align-items: center; }
.start { width: 24px; height: 24px; margin: 1px 13px 0 0; }
.search { width: 219px; height: 32px; border-radius: 16px; background: #f0fcfd; border: 1px solid #c5dde0; display: flex; align-items: center; padding: 0 7px 0 11px; font-size: 14px; letter-spacing: -.5px; color: #555; gap: 9px; margin-right: 3px; }
.cricket { margin-left: auto; }
.app { width: 44px; height: 40px; display: grid; place-items: center; position: relative; }
.app > svg { width: 24px; height: 24px; overflow: visible; }
.run::after, .cur::after { content: ""; position: absolute; bottom: 1px; left: 19px; width: 6px; height: 3px; border-radius: 2px; background: #73807f; }
.cur::before { content: ""; position: absolute; inset: 0 3px; background: #e6fbf8; border: 1px solid #d5eeea; border-radius: 4px; }
.cur svg { position: relative; }
.cur::after { width: 16px; left: 14px; background: #0a73d0; }
.badge { position: absolute; left: 23px; top: 3px; width: 16px; height: 16px; border-radius: 8px; background: #0a73d0; color: #fff; font-size: 10.5px; line-height: 16px; text-align: center; font-weight: 400; }
.tt { font: 12px "Open Sans", sans-serif; fill: #1a1a1a; }
.n { font: 10.5px "Open Sans", sans-serif; fill: #fff; }
```
FILE: charts.js
```js
const NS = 'http://www.w3.org/2000/svg';
function add(parent, tag, attrs, text) {
  const el = document.createElementNS(NS, tag);
  for (const k in attrs) el.setAttribute(k, attrs[k]);
  if (text) el.textContent = text;
  parent.appendChild(el);
}

// Season totals: start angle, end angle (degrees clockwise from the top), colour.
const slices = [[0, 3.15, '#4e79a7'], [3.15, 212.04, '#f48f2c'], [212.04, 329.1, '#76b5b0'], [329.1, 338.15, '#59a14f'], [338.15, 360, '#b07aa1']];
const pie = document.getElementById('pie');
const cx = 463.7, cy = 673.8, r = 244.5;
const at = a => (cx + r * Math.sin(a * Math.PI / 180)) + ' ' + (cy - r * Math.cos(a * Math.PI / 180));
for (const [a, b, fill] of slices)
  add(pie, 'path', { d: `M${cx} ${cy}L${at(a)}A${r} ${r} 0 ${b - a > 180 ? 1 : 0} 1 ${at(b)}Z`, fill });

// Yield per year: vertical position of each mark.
const ys = [714.7, 713.7, 731.7, 730, 731.7, 740.7, 726.3, 692.7, 691, 678.3, 669, 663.3, 675.7, 651.7, 643.3, 642.7, 617.3, 608, 617.3, 583, 502.3, 504, 518.3];
const dots = document.getElementById('dots'), years = document.getElementById('years');
ys.forEach((y, i) => {
  const x = 724.4 + 21.05 * i;
  add(dots, 'circle', { cx: x, cy: y, r: 2.4 + (740.7 - y) / 238 * 2.7 });
  const n = 1997 + i;
  add(years, 'text', { transform: `translate(${x + 4.3} 863.5) rotate(-90)`, textLength: 46.5 }, n + '-' + String(n + 1).slice(2));
  add(years, 'path', { d: `M${x + 10.5} 812v4`, stroke: '#f1f0ee' });
});
```
